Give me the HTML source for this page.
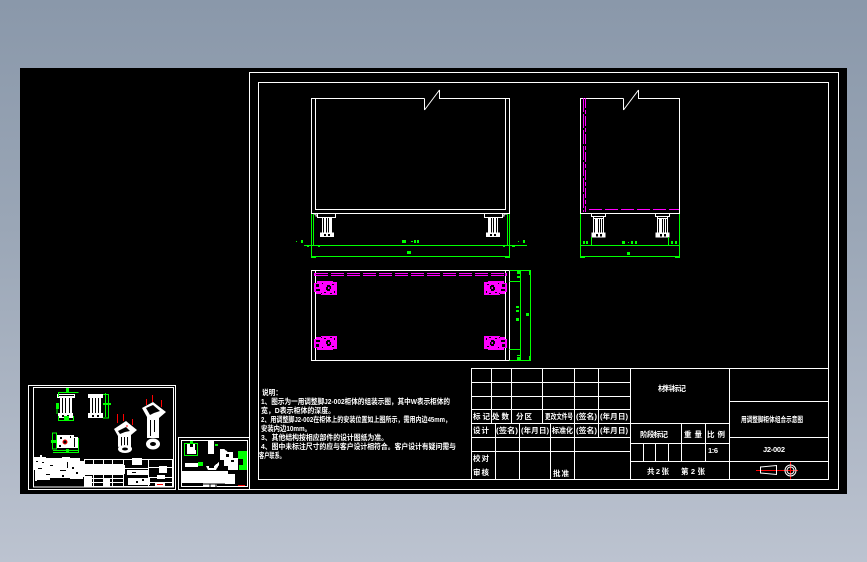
<!DOCTYPE html>
<html><head><meta charset="utf-8"><style>
html,body{margin:0;padding:0;width:867px;height:562px;overflow:hidden;background:linear-gradient(180deg,#8a98aa 0%,#9aa6b6 40%,#bcc3d0 100%)}
svg{position:absolute;left:0;top:0;display:block}
text{font-family:"Liberation Sans","WenQuanYi Zen Hei","Noto Sans CJK SC",sans-serif;fill:#fff;font-size:7.5px;font-weight:700}
</style></head><body>
<svg width="867" height="562" viewBox="0 0 867 562" xmlns="http://www.w3.org/2000/svg">
<defs>
<g id="footF" shape-rendering="crispEdges">
<path fill="none" stroke="#fff" d="M6.500 0V4.500H24.500V0M2 1H5M5 1V3H7"/>
<rect x="11" y="5" width="10" height="15" fill="#fff"/>
<path stroke="#000" d="M12.500 5V20M15.500 5V20M17.500 5V20" fill="none"/>
<rect x="9" y="19.500" width="14" height="4.500" fill="#fff"/>
<rect x="13" y="21" width="2" height="2" fill="#000"/><rect x="17" y="21" width="2" height="2" fill="#000"/>
</g>
<g id="footS" shape-rendering="crispEdges">
<path fill="none" stroke="#fff" d="M0.500 0V3.500H14.500V0M2.500 0.500H12.500M2.500 3.500V5.500H12.500V3.500"/>
<rect x="2" y="5" width="11" height="15" fill="#fff"/>
<path stroke="#000" d="M3.500 6V20M7.500 6V20M9.500 6V20M11.500 6V20" fill="none"/>
<rect x="0.500" y="19.500" width="14" height="5" fill="#fff"/>
<rect x="5" y="21" width="2" height="2.500" fill="#000"/><rect x="9" y="21" width="2" height="2.500" fill="#000"/>
</g>
<g id="pad" shape-rendering="crispEdges">
<path fill="#f0f" d="M1 2H4V0H20V1H24V14H8V13H3V11H1Z"/>
<path fill="#000" d="M3 3H6V6H3ZM3 8H7V10H3ZM14 4H17V5H18V8H17V10H14V9H13V6H14ZM9 2H10V3H9ZM19 3H21V4H19ZM8 12H9V13H8ZM11 11H13V12H11ZM17 12H19V13H17ZM21 10H22V12H21Z"/>
<rect x="15" y="6" width="1.500" height="2" fill="#f0f"/>
</g>
</defs>
<rect x="20" y="68" width="827" height="426" fill="#000"/>
<g fill="none" stroke="#fff" shape-rendering="crispEdges">
<path d="M249.500 489.500V72.500H838.500V489.500H178.500V437.500H249.500"/>
<rect x="258.500" y="82.500" width="570" height="397"/>
<path d="M424.500 98.500H311.500V213.500H509.500V98.500H439.500V90M424.500 98.500V110"/>
<path d="M315.500 98.500V209.500H505.500V98.500"/>
<path d="M623.500 98.500H580.500V213.500H679.500V98.500H638.500V90M623.500 98.500V110"/>
<rect x="311.500" y="270.500" width="198" height="90"/>
<path d="M315.500 270.500V360.500M505.500 270.500V360.500"/>
<rect x="471.500" y="368.500" width="357" height="111"/>
<path d="M471.500 382.500H630.500M471.500 396.500H630.500M471.500 409.500H630.500M471.500 423.500H729.500M471.500 437.500H630.500M471.500 451.500H630.500"/>
<path d="M491.500 368.500V423.500M511.500 368.500V423.500M542.500 368.500V423.500M574.500 368.500V479.500M598.500 368.500V437.500M630.500 368.500V479.500M729.500 368.500V479.500"/>
<path d="M495.500 423.500V479.500M519.500 423.500V479.500M550.500 423.500V479.500"/>
<path d="M630.500 443.500H729.500M630.500 461.500H828.500M729.500 401.500H828.500M729.500 437.500H828.500"/>
<path d="M681.500 423.500V461.500M705.500 423.500V461.500M643.500 443.500V461.500M655.500 443.500V461.500M668.500 443.500V461.500"/>
<rect x="28.500" y="385.500" width="147" height="104"/>
<rect x="33.500" y="387.500" width="140" height="99.500"/>
<rect x="181.500" y="440.500" width="66" height="46"/>
</g>
<path d="M424.500 110L439.500 90M623.500 110L638.500 90" fill="none" stroke="#fff"/>
<g fill="none" stroke="#f0f" shape-rendering="crispEdges">
<path d="M583.500 98V212" stroke-dasharray="14 2"/>
<path d="M585.500 98V212" stroke-dasharray="10 2 4 2"/>
<path d="M589 209.500H679" stroke-dasharray="13 3"/>
<path d="M315 273.500H505" stroke-dasharray="13 3"/>
<path d="M315 275.500H505" stroke-dasharray="13 3"/>
</g>
<rect x="314" y="273" width="2" height="3" fill="#f0f"/><rect x="505" y="273" width="2" height="3" fill="#f0f"/>
<use href="#footF" x="311" y="213"/>
<g transform="translate(509,213) scale(-1,1)"><use href="#footF"/></g>
<use href="#footS" x="591" y="213"/>
<use href="#footS" x="655" y="213"/>
<use href="#pad" x="313" y="281"/>
<g transform="translate(508,281) scale(-1,1)"><use href="#pad"/></g>
<g transform="translate(313,350) scale(1,-1)"><use href="#pad"/></g>
<g transform="translate(508,350) scale(-1,-1)"><use href="#pad"/></g>
<g fill="none" stroke="#0f0" shape-rendering="crispEdges">
<path d="M304 245.500H527M311.500 256.500H509.500M311.500 214V256M509.500 214V256M313.500 214V245M507.500 214V245"/>
<path d="M580.500 245.500H679.500M580.500 256.500H679.500M580.500 214V256M679.500 214V256M591.500 237V245M668.500 237V245"/>
<path d="M509.500 270.500H530.500V360.500H509.500M520.500 270.500V360.500M509.500 281.500H520.500M509.500 349.500H520.500"/>
</g>
<g fill="#0f0" shape-rendering="crispEdges">
<rect x="311" y="256" width="5" height="2"/><rect x="505" y="256" width="5" height="2"/>
<rect x="580" y="256" width="5" height="2"/><rect x="675" y="256" width="5" height="2"/>
<rect x="301" y="240" width="2" height="3"/><rect x="523" y="240" width="2" height="3"/>
<rect x="296" y="241" width="1" height="1"/><rect x="518" y="241" width="1" height="1"/>
<rect x="318" y="245" width="2" height="2"/><rect x="307" y="245" width="2" height="2"/>
<rect x="503" y="245" width="2" height="2"/><rect x="512" y="245" width="3" height="2"/>
<rect x="517" y="271" width="3" height="3"/><rect x="517" y="357" width="3" height="3"/>
<rect x="529" y="271" width="2" height="4"/><rect x="529" y="356" width="2" height="4"/>
<rect x="516" y="306" width="3" height="2"/><rect x="516" y="310" width="3" height="2"/>
<rect x="516" y="318" width="3" height="3"/>
<rect x="526" y="313" width="3" height="3"/>
<rect x="517" y="276" width="3" height="2"/><rect x="517" y="355" width="3" height="1"/>
<rect x="586" y="241" width="2" height="3"/><rect x="583" y="241" width="2" height="3"/>
<rect x="671" y="241" width="2" height="3"/><rect x="675" y="241" width="2" height="3"/>
<rect x="622" y="241" width="3" height="3"/><rect x="631" y="241" width="2" height="3"/><rect x="635" y="241" width="2" height="3"/>
<rect x="628" y="242" width="1" height="1"/>
<rect x="627" y="252" width="3" height="3"/>
<rect x="402" y="240" width="4" height="3"/><rect x="411" y="241" width="2" height="1"/><rect x="414" y="240" width="2" height="3"/><rect x="417" y="240" width="2" height="3"/>
<rect x="407" y="251" width="4" height="3"/>
</g>
<text x="262" y="395" textLength="20" lengthAdjust="spacingAndGlyphs">说明：</text>
<text x="261" y="404" textLength="189" lengthAdjust="spacingAndGlyphs">1、图示为一用调整脚J2-002柜体的组装示图，其中W表示柜体的</text>
<text x="261" y="413" textLength="74" lengthAdjust="spacingAndGlyphs">宽，D表示柜体的深度。</text>
<text x="261" y="422" textLength="190" lengthAdjust="spacingAndGlyphs">2、用调整脚J2-002在柜体上的安装位置如上图所示，需用内边45mm，</text>
<text x="261" y="431" textLength="50" lengthAdjust="spacingAndGlyphs">安装内边10mm。</text>
<text x="261" y="440" textLength="127" lengthAdjust="spacingAndGlyphs">3、其他结构按相应部件的设计图纸为准。</text>
<text x="261" y="449" textLength="195" lengthAdjust="spacingAndGlyphs">4、图中未标注尺寸的应与客户设计相符合。客户设计有疑问需与</text>
<text x="259" y="458" textLength="26" lengthAdjust="spacingAndGlyphs">客户联系。</text>
<text x="473" y="419" textLength="36" lengthAdjust="spacing">标记处数</text>
<text x="516" y="419" textLength="16" lengthAdjust="spacing">分区</text>
<text x="545" y="419" textLength="28" lengthAdjust="spacingAndGlyphs">更改文件号</text>
<text x="576" y="419" textLength="21" lengthAdjust="spacingAndGlyphs">(签名)</text>
<text x="600" y="419" textLength="28" lengthAdjust="spacingAndGlyphs">(年月日)</text>
<text x="473" y="433" textLength="16" lengthAdjust="spacing">设计</text>
<text x="496" y="433" textLength="22" lengthAdjust="spacingAndGlyphs">(签名)</text>
<text x="521" y="433" textLength="28" lengthAdjust="spacingAndGlyphs">(年月日)</text>
<text x="552" y="433" textLength="21" lengthAdjust="spacingAndGlyphs">标准化</text>
<text x="576" y="433" textLength="21" lengthAdjust="spacingAndGlyphs">(签名)</text>
<text x="600" y="433" textLength="28" lengthAdjust="spacingAndGlyphs">(年月日)</text>
<text x="473" y="461" textLength="16" lengthAdjust="spacing">校对</text>
<text x="473" y="475" textLength="16" lengthAdjust="spacing">审核</text>
<text x="553" y="476" textLength="16" lengthAdjust="spacing">批准</text>
<text x="658" y="391" textLength="28" lengthAdjust="spacing">材料标记</text>
<text x="640" y="437" textLength="28" lengthAdjust="spacing">阶段标记</text>
<text x="684" y="437" textLength="18" lengthAdjust="spacing">重量</text>
<text x="707" y="437" textLength="18" lengthAdjust="spacing">比例</text>
<text x="708" y="453" textLength="10" lengthAdjust="spacing">1:6</text>
<text x="647" y="474" textLength="22" lengthAdjust="spacing">共2张</text>
<text x="681" y="474" textLength="24" lengthAdjust="spacing">第2张</text>
<text x="741" y="422" textLength="62" lengthAdjust="spacingAndGlyphs">用调整脚柜体组合示意图</text>
<text x="763" y="452" textLength="22" lengthAdjust="spacing">J2-002</text>
<path d="M756 470.500H798M790.500 462V479" stroke="#f00" fill="none" shape-rendering="crispEdges"/>
<path d="M760.500 467L776.500 465.500V474.500L760.500 473Z" stroke="#fff" fill="none"/>
<path d="M762 470.500H775" stroke="#f00" fill="none" shape-rendering="crispEdges"/>
<circle cx="790.500" cy="470.500" r="5.500" fill="none" stroke="#fff"/>
<circle cx="790.500" cy="470.500" r="3.500" fill="none" stroke="#fff"/>
<!-- thumbnail 1 -->
<g shape-rendering="crispEdges">
<path fill="#fff" d="M57 394H75V398H72V413H73V418H58V413H60V398H57Z"/>
<path fill="#000" d="M62 398H63V413H62ZM65 398H66V413H65ZM69 398H70V413H69ZM62 415H64V417H62ZM67 415H69V417H67ZM59 395H74V396H59Z"/>
<path fill="#fff" d="M88 394H103V398H101V413H103V418H88V413H90V398H88Z"/>
<path fill="#000" d="M92 398H93V413H92ZM95 398H96V413H95ZM98 398H99V413H98ZM92 415H94V417H92ZM97 415H99V417H97Z"/>
<g fill="none" stroke="#0f0">
<path d="M58.500 397V392.500H78.500M66.500 392V388M57 407V414M58.500 416V420.500H73.500V416"/>
<path d="M103 394.500H108.500V418H103M105.500 393V417"/>
<path d="M52.500 433H56.500V449H52.500ZM53 450.500H78.500V452.500H53M78.500 438V452"/>
</g>
<rect x="66" y="388" width="3" height="4" fill="#0f0"/><rect x="56" y="403" width="3" height="6" fill="#0f0"/><rect x="64" y="416" width="5" height="4" fill="#0f0"/><rect x="103" y="403" width="8" height="2" fill="#0f0"/><rect x="51" y="440" width="6" height="3" fill="#0f0"/><rect x="66" y="449" width="3" height="3" fill="#0f0"/>
<path fill="#fff" d="M57 435H74V437H78V448H57Z"/>
<path fill="#000" d="M74 438H75V447H74ZM60 437H62V439H60ZM59 445H61V447H59ZM70 436H71V438H70Z"/>
</g>
<circle cx="65" cy="442" r="2" fill="#000" stroke="#f00"/>
<path fill="#fff" d="M114 429L126 421L137 430L131 435V447L125 445L118 447V436Z"/>
<path fill="#000" d="M118 431L126 427L130 431L125 432L120 434ZM121 437H122V447H121ZM124 437H125V447H124ZM127 437H128V447H127Z"/>
<ellipse cx="125" cy="449" rx="7" ry="4" fill="#fff"/><ellipse cx="125" cy="449" rx="3" ry="1.500" fill="#000"/>
<path fill="#fff" d="M142 408L153 402L166 412L159 418V438H147V417Z"/>
<path fill="#000" d="M146 408L153 405L160 411L154 413L150 415ZM150 420H151V436H150ZM154 420H155V432H154Z"/>
<ellipse cx="153" cy="444" rx="7" ry="5.500" fill="#fff"/><ellipse cx="153" cy="444" rx="3" ry="2" fill="#000"/>
<g shape-rendering="crispEdges">
<g fill="none" stroke="#f00"><path d="M117.500 414V423M123.500 414V421M132.500 419V425M146.500 399V405M152.500 395V402M161.500 400V407M126 426H128"/></g>
<path fill="#fff" d="M34 457H40V455H42V457H46V458H62V457H70V458H80V461H84V477H83V479H70V478H50V480H37V481H35V470H34Z"/>
<path fill="#000" d="M50 465H53V466H50ZM67 462H68V468H67ZM60 470H66V471H60ZM42 462H44V463H42ZM72 467H74V469H72ZM38 468H42V469H38ZM46 474H50V475H46ZM76 472H78V474H76ZM62 475H64V477H62ZM36 461H38V462H36Z"/>
<g fill="none" stroke="#fff"><rect x="84.500" y="459.500" width="88" height="27"/>
<path d="M84.500 464.500H123M84.500 474.500H123M84.500 478.500H123M84.500 482.500H123M93.500 459.500V486M103.500 459.500V486M112.500 459.500V486M123.500 459.500V486M148.500 459.500V486M148.500 467.500H172M148.500 477.500H172M148.500 482.500H172M123.500 468.500H148"/></g>
<rect x="84" y="465" width="41" height="9" fill="#fff"/>
<path fill="#fff" d="M85 476H92V486H85ZM104 478H110V486H104ZM127 470H148V475H127ZM128 478H150V485H128ZM132 458H142V465H132ZM159 466H167V473H159ZM157 475H165V479H157ZM155 483H165V486H155Z"/>
<path fill="#000" d="M132 472H136V473H132ZM136 481H138V483H136ZM142 479H144V481H142Z"/>
<rect x="157" y="484" width="6" height="1" fill="#f00"/>
<!-- thumbnail 2 -->
<g fill="none" stroke="#0f0"><rect x="184.500" y="443.500" width="13" height="12"/></g>
<path fill="#fff" d="M187 444H190V447H193V444H195V450H196V454H187ZM208 441H214V454H208ZM185 463H198V467H185ZM206 466H209V468H214V466L219 462V465L216 470H208ZM220 449H224L228 452H233V458H238V470H228V466H224V460H220Z"/>
<path fill="#0f0" d="M238 451H247V470H239V465H243V459H238ZM215 444H218V446H215ZM198 462H203V466H198ZM190 441H193V444H190Z"/>
<path fill="#000" d="M226 454H229V457H226ZM231 460H234V462H231Z"/>
<path fill="#fff" d="M181 471H228V474H235V484H217V487H203V483H181Z"/>
<path fill="none" stroke="#000" d="M203 484H225M210 484V487M216 484V487"/>
<rect x="238" y="485" width="7" height="1" fill="#f00"/>
</g>
</svg>
</body></html>
